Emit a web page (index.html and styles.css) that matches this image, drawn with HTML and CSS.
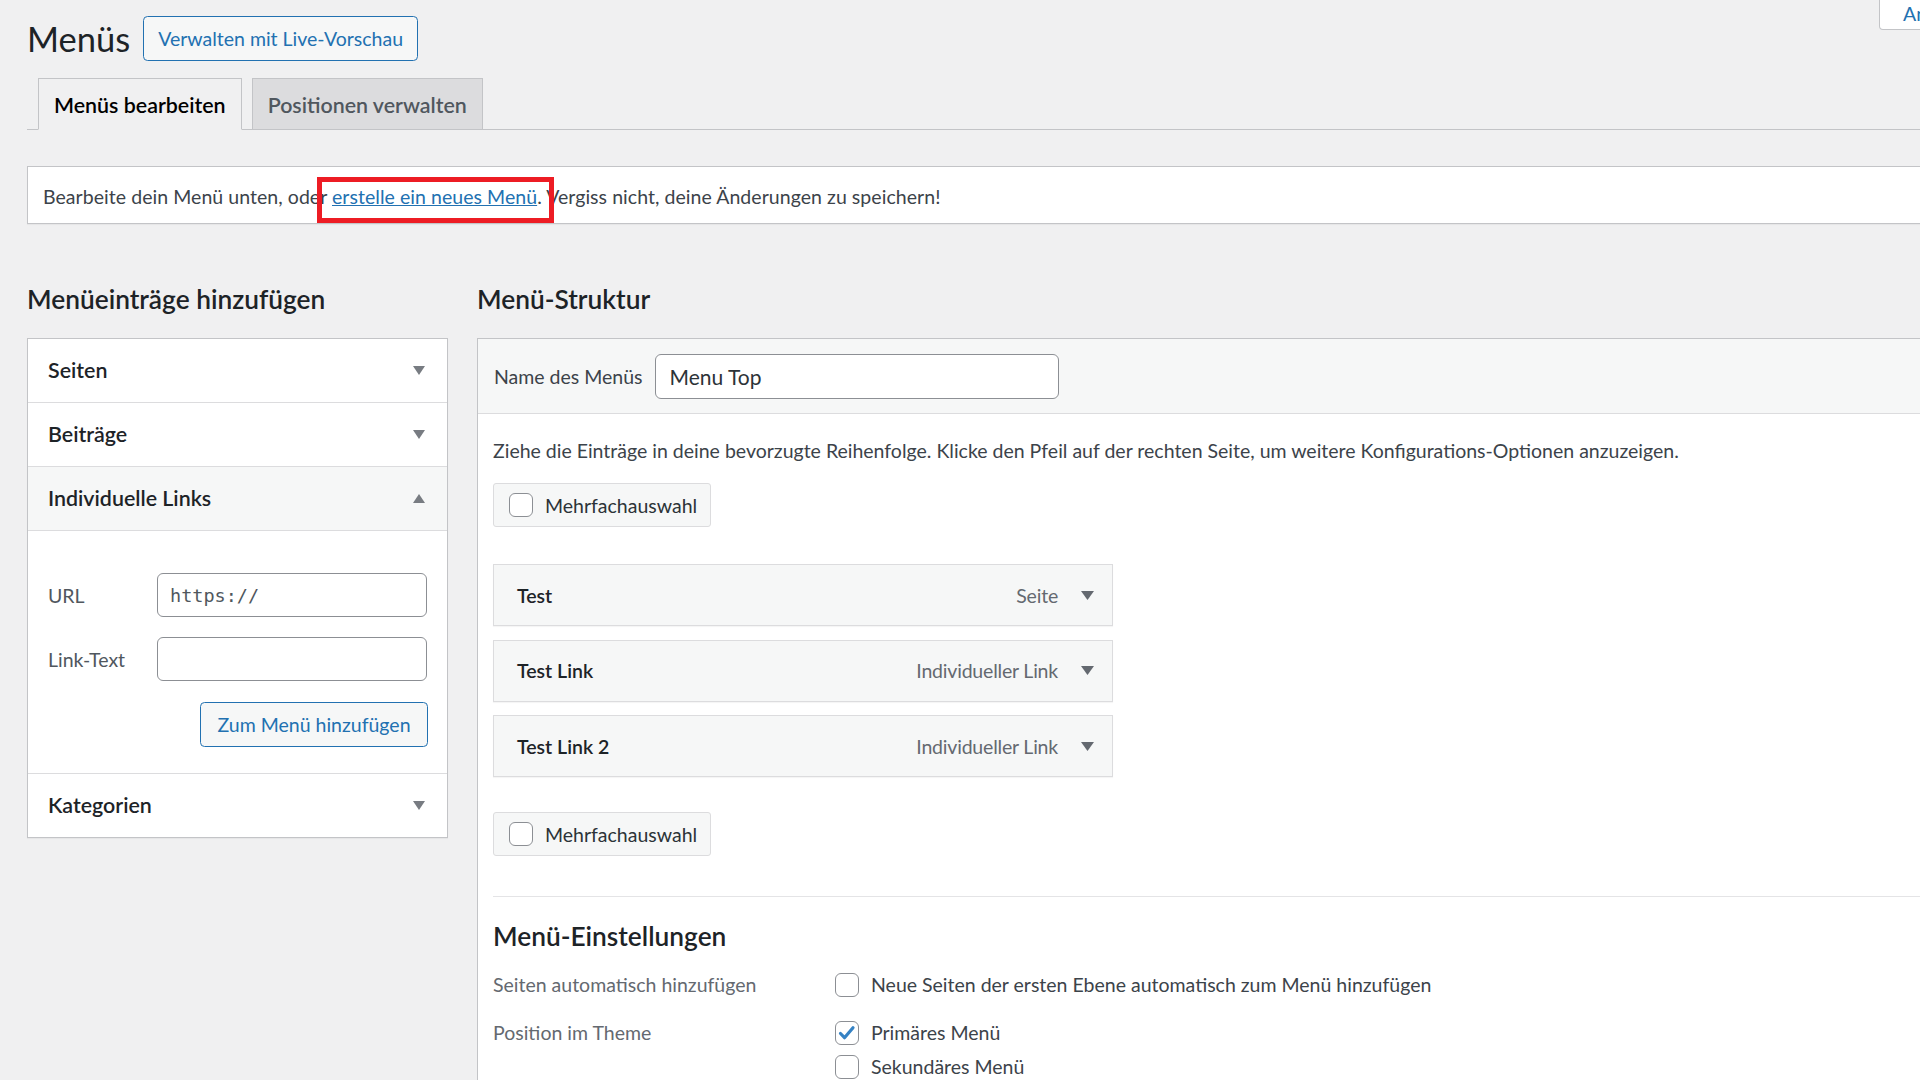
FILE: index.html
```html
<!DOCTYPE html>
<html lang="de">
<head>
<meta charset="utf-8">
<title>Menüs</title>
<link rel="stylesheet" href="styles.css">
</head>
<body>
<div class="screen-meta">Ansicht anpassen</div>
<div class="wrap">
  <div class="title-row">
    <h1 class="page-title">Menüs</h1>
    <a class="title-action">Verwalten mit Live-Vorschau</a>
  </div>
  <nav class="tabs">
    <a class="tab active">Menüs bearbeiten</a>
    <a class="tab">Positionen verwalten</a>
  </nav>
  <div class="notice">
    <p>Bearbeite dein Menü unten, oder <a class="link marked">erstelle ein neues Menü</a>. Vergiss nicht, deine Änderungen zu speichern!</p>
  </div>
  <div class="columns">
    <div class="col-left">
      <h2 class="col-title">Menüeinträge hinzufügen</h2>
      <div class="acc">
        <div class="acc-title"><span>Seiten</span><svg class="caret" width="12" height="9" viewBox="0 0 12 9"><path d="M0 0h12L6 9z"/></svg></div>
        <div class="acc-title"><span>Beiträge</span><svg class="caret" width="12" height="9" viewBox="0 0 12 9"><path d="M0 0h12L6 9z"/></svg></div>
        <div class="acc-title open"><span>Individuelle Links</span><svg class="caret" width="12" height="9" viewBox="0 0 12 9"><path d="M0 9h12L6 0z"/></svg></div>
        <div class="acc-body">
          <div class="field"><label class="field-label">URL</label><input class="text-input mono" type="text" value="https://"></div>
          <div class="field"><label class="field-label">Link-Text</label><input class="text-input" type="text" value=""></div>
          <div class="btn-row"><a class="btn">Zum Menü hinzufügen</a></div>
        </div>
        <div class="acc-title last"><span>Kategorien</span><svg class="caret" width="12" height="9" viewBox="0 0 12 9"><path d="M0 0h12L6 9z"/></svg></div>
      </div>
    </div>
    <div class="col-right">
      <h2 class="col-title">Menü-Struktur</h2>
      <div class="mgmt">
        <div class="mgmt-head">
          <label class="name-label">Name des Menüs</label>
          <input class="name-input" type="text" value="Menu Top">
        </div>
        <div class="mgmt-body">
          <p class="instructions">Ziehe die Einträge in deine bevorzugte Reihenfolge. Klicke den Pfeil auf der rechten Seite, um weitere Konfigurations-Optionen anzuzeigen.</p>
          <div class="bulk"><span class="cb"></span><span>Mehrfachauswahl</span></div>
          <ul class="items">
            <li class="item"><span class="item-title">Test</span><span class="item-type">Seite</span><svg class="item-caret" width="13" height="9" viewBox="0 0 13 9"><path d="M0 0h13L6.5 9z"/></svg></li>
            <li class="item"><span class="item-title">Test Link</span><span class="item-type">Individueller Link</span><svg class="item-caret" width="13" height="9" viewBox="0 0 13 9"><path d="M0 0h13L6.5 9z"/></svg></li>
            <li class="item"><span class="item-title">Test Link 2</span><span class="item-type">Individueller Link</span><svg class="item-caret" width="13" height="9" viewBox="0 0 13 9"><path d="M0 0h13L6.5 9z"/></svg></li>
          </ul>
          <div class="bulk bulk-bottom"><span class="cb"></span><span>Mehrfachauswahl</span></div>
          <div class="settings">
            <h3 class="settings-title">Menü-Einstellungen</h3>
            <dl class="setting">
              <dt>Seiten automatisch hinzufügen</dt>
              <dd><label class="cb-label"><span class="cb"></span>Neue Seiten der ersten Ebene automatisch zum Menü hinzufügen</label></dd>
            </dl>
            <dl class="setting setting-pos">
              <dt>Position im Theme</dt>
              <dd>
                <label class="cb-label"><span class="cb checked"><svg width="22" height="22" viewBox="0 0 22 22"><path d="M4.5 11.5l4 4.2 8.5-10" fill="none" stroke="#3582c4" stroke-width="3.2" stroke-linecap="round" stroke-linejoin="round"/></svg></span>Primäres Menü</label>
                <label class="cb-label"><span class="cb"></span>Sekundäres Menü</label>
              </dd>
            </dl>
          </div>
        </div>
      </div>
    </div>
  </div>
</div>
</body>
</html>
```
FILE: styles.css
```css
html, body {
  margin: 0;
  overflow: hidden;
}
body {
  position: relative;
  width: 1920px;
  height: 1080px;
  background: #f0f0f1;
  font-family: Lato, "Noto Sans", sans-serif;
  font-size: 19.5px;
  color: #3c434a;
}
a { text-decoration: none; }

.screen-meta {
  position: absolute;
  top: 0;
  left: 1879px;
  height: 30px;
  box-sizing: border-box;
  border: 1px solid #c3c4c7;
  border-top: none;
  border-radius: 0 0 4px 4px;
  background: #fff;
  padding: 0 16px 0 23px;
  line-height: 28px;
  color: #2271b1;
  white-space: nowrap;
}

.wrap {
  margin-left: 27px;
  width: 1980px;
}

.title-row {
  display: flex;
  align-items: center;
  padding-top: 16px;
  height: 45px;
}
.page-title {
  margin: 0;
  font-size: 34.5px;
  font-weight: 400;
  line-height: 45px;
  color: #1d2327;
}
.title-action {
  margin-left: 13px;
  height: 45px;
  box-sizing: border-box;
  border: 1px solid #2271b1;
  border-radius: 4.5px;
  background: #f6f7f7;
  color: #2271b1;
  padding: 0 14px;
  line-height: 43px;
}

.tabs {
  display: flex;
  margin-top: 17px;
  height: 51px;
  padding-left: 11px;
  border-bottom: 1px solid #c3c4c7;
}
.tab {
  height: 52px;
  box-sizing: border-box;
  border: 1px solid #c3c4c7;
  background: #dcdcde;
  color: #50575e;
  font-size: 21.4px;
  font-weight: 600;
  line-height: 52px;
  padding: 0 15px;
  margin-right: 10px;
}
.tab.active {
  background: #f0f0f1;
  border-bottom-color: #f0f0f1;
  color: #000;
}

.notice {
  margin-top: 36px;
  height: 58px;
  box-sizing: border-box;
  display: flex;
  align-items: center;
  padding: 0 15px;
  background: #fff;
  border: 1px solid #c3c4c7;
  box-shadow: 0 1px 1px rgba(0, 0, 0, .04);
}
.notice p {
  margin: 0;
  padding-top: 2px;
  letter-spacing: 0.05px;
}
.link {
  color: #2271b1;
  text-decoration: underline;
}
.marked { position: relative; }
.marked::after {
  content: "";
  position: absolute;
  left: -15px;
  right: -17px;
  top: -8px;
  bottom: -15px;
  border: 5px solid #ed1c24;
}

.columns {
  display: flex;
  align-items: flex-start;
  gap: 29px;
  margin-top: 59px;
}
.col-left { width: 421px; flex: none; }
.col-right { flex: 1; }
.col-title {
  margin: 0 0 22px;
  font-size: 26.3px;
  font-weight: 600;
  line-height: 33px;
  color: #1d2327;
}

.acc {
  background: #fff;
  border: 1px solid #c3c4c7;
  box-shadow: 0 1px 1px rgba(0, 0, 0, .04);
}
.acc-title {
  height: 63px;
  display: flex;
  align-items: center;
  justify-content: space-between;
  padding: 0 22px 0 20px;
  border-bottom: 1px solid #dcdcde;
  font-size: 21.4px;
  font-weight: 600;
  color: #1d2327;
}
.acc-title span { margin-top: -2px; }
.acc-title.open { background: #f6f7f7; }
.acc-title.last { border-bottom: none; }
.caret { fill: #787c82; }

.acc-body {
  padding: 42px 20px 26px 20px;
  border-bottom: 1px solid #dcdcde;
}
.field {
  display: flex;
  align-items: center;
  margin-bottom: 20px;
}
.field-label {
  width: 109px;
  flex: none;
  color: #50575e;
}
.text-input {
  width: 270px;
  height: 44px;
  box-sizing: border-box;
  border: 1px solid #8c8f94;
  border-radius: 6px;
  background: #fff;
  padding: 0 12px;
  font-family: Lato, sans-serif;
  font-size: 19.5px;
  color: #2c3338;
  outline: none;
}
.text-input.mono {
  font-family: "DejaVu Sans Mono", "Liberation Mono", monospace;
  font-size: 18.5px;
  color: #50575e;
}
.btn-row {
  display: flex;
  justify-content: flex-end;
  margin-top: 21px;
  margin-right: -1px;
}
.btn {
  width: 228px;
  height: 45px;
  box-sizing: border-box;
  border: 1px solid #2271b1;
  border-radius: 4.5px;
  background: #f6f7f7;
  color: #2271b1;
  text-align: center;
  line-height: 43px;
}

.mgmt {
  background: #fff;
  border: 1px solid #c3c4c7;
  border-right: none;
  min-height: 900px;
}
.mgmt-head {
  display: flex;
  align-items: center;
  gap: 12px;
  padding: 15px 16px 14px;
  background: #f6f7f7;
  border-bottom: 1px solid #dcdcde;
}
.name-label { color: #3c434a; }
.name-input {
  width: 404px;
  height: 45px;
  box-sizing: border-box;
  border: 1px solid #8c8f94;
  border-radius: 6px;
  background: #fff;
  padding: 0 14px;
  font-family: Lato, sans-serif;
  font-size: 21px;
  color: #2c3338;
  outline: none;
}
.mgmt-body { padding: 0 0 0 15px; }
.instructions {
  margin: 22px 0 0;
  line-height: 29px;
}

.cb {
  width: 24px;
  height: 24px;
  box-sizing: border-box;
  flex: none;
  border: 1px solid #8c8f94;
  border-radius: 6px;
  background: #fff;
  display: inline-flex;
  align-items: center;
  justify-content: center;
}
.bulk {
  display: flex;
  align-items: center;
  gap: 12px;
  width: 218px;
  height: 44px;
  box-sizing: border-box;
  margin-top: 18px;
  padding-left: 15px;
  border: 1px solid #dcdcde;
  border-radius: 3px;
  background: #f6f7f7;
  color: #2c3338;
}
.bulk-bottom { margin-top: 35px; }

.items {
  list-style: none;
  margin: 37px 0 0;
  padding: 0;
}
.item {
  width: 620px;
  height: 62px;
  box-sizing: border-box;
  display: flex;
  align-items: center;
  padding: 0 18px 0 23px;
  margin-bottom: 13.5px;
  background: #f6f7f7;
  border: 1px solid #dcdcde;
  box-shadow: 0 1px 1px rgba(0, 0, 0, .04);
}
.item:last-child { margin-bottom: 0; }
.item-title {
  flex: 1;
  font-weight: 600;
  color: #1d2327;
}
.item-type {
  color: #646970;
  margin-right: 23px;
  letter-spacing: -0.2px;
}
.item-caret { fill: #646970; }

.settings {
  margin-top: 40px;
  border-top: 1px solid #e4e4e6;
}
.settings-title {
  margin: 23px 0 0;
  font-size: 26.3px;
  font-weight: 600;
  line-height: 33px;
  color: #1d2327;
}
.setting {
  display: flex;
  margin: 17px 0 0;
  line-height: 29px;
}
.setting-pos { margin-top: 19px; }
.setting dt {
  width: 342px;
  flex: none;
  color: #646970;
}
.setting dd {
  margin: 0;
  display: flex;
  flex-direction: column;
  gap: 5px;
}
.cb-label {
  display: flex;
  align-items: center;
  gap: 12px;
  color: #3c434a;
}
```
